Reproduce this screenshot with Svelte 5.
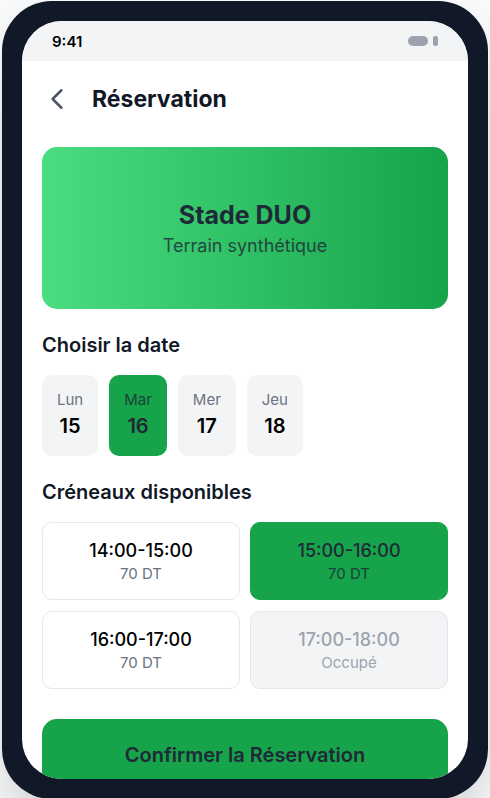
<script>
  const days = [
    { name: 'Lun', number: 15 },
    { name: 'Mar', number: 16 },
    { name: 'Mer', number: 17 },
    { name: 'Jeu', number: 18 }
  ];
  const slots = [
    { time: '14:00-15:00', note: '70 DT' },
    { time: '15:00-16:00', note: '70 DT' },
    { time: '16:00-17:00', note: '70 DT' },
    { time: '17:00-18:00', note: 'Occupé', taken: true }
  ];

  let selectedDay = $state(16);
  let selectedSlot = $state('15:00-16:00');
</script>

<div class="page">
  <div class="phone">
    <div class="screen">
      <div class="status">
        <span>9:41</span>
        <div class="indicators">
          <span class="signal"></span>
          <span class="battery"></span>
        </div>
      </div>

      <main>
        <header>
          <button class="back" aria-label="Retour">
            <svg viewBox="0 0 24 24" fill="none" stroke="currentColor" stroke-width="2" stroke-linecap="round" stroke-linejoin="round">
              <path d="M15.5 19l-7-7 7-7" />
            </svg>
          </button>
          <h1>Réservation</h1>
        </header>

        <section class="venue">
          <h2>Stade DUO</h2>
          <p>Terrain synthétique</p>
        </section>

        <h3>Choisir la date</h3>
        <div class="days">
          {#each days as day}
            <button
              class="day"
              class:selected={selectedDay === day.number}
              aria-pressed={selectedDay === day.number}
              onclick={() => (selectedDay = day.number)}
            >
              <span class="note">{day.name}</span>
              <span class="number">{day.number}</span>
            </button>
          {/each}
        </div>

        <h3>Créneaux disponibles</h3>
        <div class="slots">
          {#each slots as slot}
            <button
              class="slot"
              class:selected={selectedSlot === slot.time}
              aria-pressed={selectedSlot === slot.time}
              disabled={slot.taken}
              onclick={() => (selectedSlot = slot.time)}
            >
              <span class="time">{slot.time}</span>
              <span class="note">{slot.note}</span>
            </button>
          {/each}
        </div>

        <button class="confirm">Confirmer la Réservation</button>
      </main>
    </div>
  </div>
</div>

<style>
  :global(body) {
    margin: 0;
    background: #f9fafb;
  }

  .page {
    box-sizing: border-box;
    height: 100vh;
    padding: 1px 2px 0;
    overflow: hidden;
    font-family: Inter, 'Liberation Sans', sans-serif;
    color: #000;
  }

  .phone {
    box-sizing: border-box;
    height: 100vh;
    padding: 20px;
    border-radius: 50px;
    background: #111827;
    box-shadow: 0 32px 64px -16px rgba(0, 0, 0, 0.25);
  }

  .screen {
    height: 100%;
    overflow: hidden;
    border-radius: 40px;
    background: #fff;
  }

  .status {
    display: flex;
    align-items: center;
    justify-content: space-between;
    height: 40px;
    padding: 0 30px;
    background: #f3f4f6;
    font-size: 15px;
    font-weight: 600;
  }

  .indicators {
    display: flex;
    gap: 5px;
  }

  .signal,
  .battery {
    height: 10px;
    border-radius: 5px;
    background: #9ca3af;
  }

  .signal {
    width: 20px;
  }

  .battery {
    width: 5px;
    border-radius: 2px;
  }

  main {
    display: flex;
    flex-direction: column;
    padding: 20px;
  }

  header {
    display: flex;
    align-items: center;
    gap: 20px;
    height: 36px;
    margin-bottom: 30px;
  }

  button {
    margin: 0;
    border: 0;
    font: inherit;
    color: inherit;
    cursor: pointer;
  }

  .back {
    width: 30px;
    height: 30px;
    padding: 0;
    background: none;
    color: #4b5563;
  }

  .back svg {
    display: block;
    width: 100%;
    height: 100%;
  }

  h1,
  h2,
  h3,
  p {
    margin: 0;
  }

  h1 {
    font-size: 23px;
    font-weight: 700;
    line-height: 36px;
    color: #111827;
  }

  .venue {
    display: flex;
    flex-direction: column;
    align-items: center;
    justify-content: center;
    height: 162px;
    border-radius: 15px;
    background: linear-gradient(to right, #4ade80, #16a34a);
    color: #1f2937;
  }

  h2 {
    font-size: 25px;
    font-weight: 700;
    line-height: 35px;
  }

  .venue p {
    font-size: 18px;
    line-height: 26px;
    opacity: 0.8;
  }

  h3 {
    margin: 20px 0 14px;
    font-size: 20px;
    font-weight: 600;
    line-height: 32px;
    color: #111827;
  }

  .days {
    display: flex;
    gap: 11px;
  }

  .day,
  .slot {
    display: flex;
    flex-direction: column;
    align-items: center;
    padding: 15px;
    border-radius: 10px;
  }

  .day {
    padding-bottom: 14px;
    background: #f3f4f6;
  }

  .note {
    font-size: 15px;
    line-height: 20px;
    color: #6b7280;
  }

  .number {
    font-size: 20px;
    font-weight: 600;
    line-height: 32px;
  }

  .slots {
    display: grid;
    grid-template-columns: 1fr 1fr;
    gap: 11px 10px;
  }

  .slot {
    border: 1px solid #e5e7eb;
    background: #fff;
  }

  .time {
    font-size: 18px;
    font-weight: 500;
    line-height: 26px;
  }

  .selected {
    border-color: #16a34a;
    background: #16a34a;
    color: #1f2937;
  }

  .selected .note {
    color: inherit;
    opacity: 0.8;
  }

  .slot:disabled {
    background: #f3f4f6;
    color: #9ca3af;
    cursor: default;
  }

  .slot:disabled .note {
    color: inherit;
  }

  .confirm {
    margin-top: 30px;
    padding: 20px;
    border-radius: 15px;
    background: #16a34a;
    color: #1f2937;
    font-size: 20px;
    font-weight: 600;
    line-height: 32px;
  }
</style>
